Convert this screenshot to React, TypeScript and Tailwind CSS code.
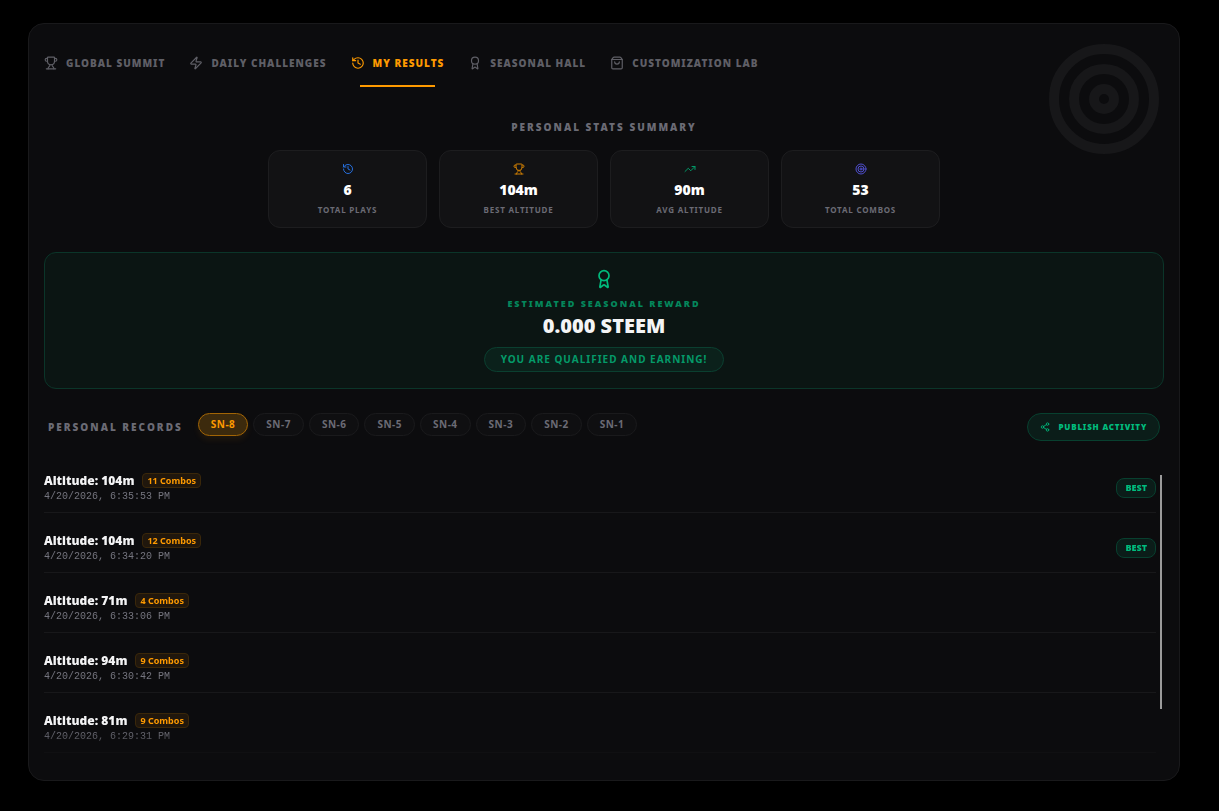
import { useState } from "react";
import {
  Award,
  History,
  Share2,
  ShoppingBag,
  Target,
  TrendingUp,
  Trophy,
  Zap,
} from "lucide-react";
import clsx from "clsx";

const tabs = [
  { id: "summit", label: "Global Summit", icon: Trophy },
  { id: "daily", label: "Daily Challenges", icon: Zap },
  { id: "results", label: "My Results", icon: History },
  { id: "hall", label: "Seasonal Hall", icon: Award },
  { id: "lab", label: "Customization Lab", icon: ShoppingBag },
];

const stats = [
  { label: "Total Plays", value: "6", icon: History, color: "text-[#2670e0]" },
  { label: "Best Altitude", value: "104m", icon: Trophy, color: "text-[#ce7e03]" },
  { label: "Avg Altitude", value: "90m", icon: TrendingUp, color: "text-[#029a68]" },
  { label: "Total Combos", value: "53", icon: Target, color: "text-[#504fd0]" },
];

const seasons = ["SN-8", "SN-7", "SN-6", "SN-5", "SN-4", "SN-3", "SN-2", "SN-1"];

const records = [
  { altitude: 104, combos: 11, date: "4/20/2026, 6:35:53 PM", best: true },
  { altitude: 104, combos: 12, date: "4/20/2026, 6:34:20 PM", best: true },
  { altitude: 71, combos: 4, date: "4/20/2026, 6:33:06 PM", best: false },
  { altitude: 94, combos: 9, date: "4/20/2026, 6:30:42 PM", best: false },
  { altitude: 81, combos: 9, date: "4/20/2026, 6:29:31 PM", best: false },
];

function TabBar() {
  const [active, setActive] = useState("results");

  return (
    <nav className="flex flex-wrap gap-6">
      {tabs.map(({ id, label, icon: Icon }) => (
        <button
          key={id}
          type="button"
          onClick={() => setActive(id)}
          className={clsx(
            "flex flex-col items-center text-[10px] leading-4 font-black tracking-widest uppercase",
            active === id ? "text-[#fe9a00]" : "text-[#5f5f66]"
          )}
        >
          <span className="flex items-center gap-2">
            <Icon size={14} />
            {label}
          </span>
          <span
            className={clsx(
              "mt-3.5 h-0.5 w-4/5",
              active === id ? "bg-[#fe9a00]" : "bg-transparent"
            )}
          />
        </button>
      ))}
    </nav>
  );
}

function StatsSummary() {
  return (
    <section className="mx-auto w-full max-w-2xl">
      <h2 className="text-center text-[10px] leading-4 font-black tracking-[2px] text-[#6b6b75] uppercase">
        Personal Stats Summary
      </h2>
      <div className="mt-[15px] grid grid-cols-4 gap-3">
        {stats.map(({ label, value, icon: Icon, color }) => (
          <div
            key={label}
            className="flex flex-col items-center gap-[5px] rounded-xl border border-[#1d1d1f] bg-[#121214] py-3"
          >
            <Icon size={12} className={color} />
            <span className="text-sm leading-5 font-black text-white">
              {value}
            </span>
            <span className="text-[8px] leading-[10px] font-bold tracking-widest text-[#6b6b75] uppercase">
              {label}
            </span>
          </div>
        ))}
      </div>
    </section>
  );
}

function RewardCard() {
  return (
    <section className="flex flex-col items-center rounded-xl border border-[#0b3529] bg-[#0b1513] p-4">
      <Award size={20} className="text-[#00bc7d]" />
      <h2 className="mt-[7px] text-[9px] leading-4 font-black tracking-[2px] text-[#04875c] uppercase">
        Estimated Seasonal Reward
      </h2>
      <p className="text-xl leading-7 font-black text-[#f4f4f5]">0.000 STEEM</p>
      <p className="mt-[7px] rounded-full border border-[#0b3f30] bg-[#0b211b] px-4 py-1 text-[10px] leading-[15px] font-bold tracking-widest text-[#049a69] uppercase">
        You are qualified and earning!
      </p>
    </section>
  );
}

function RecordsHeader() {
  const [season, setSeason] = useState("SN-8");

  return (
    <div className="flex items-start justify-between px-1">
      <div className="flex items-start gap-[15px]">
        <h2 className="pt-1.5 text-[10px] leading-4 font-black tracking-[2px] text-[#6b6b75] uppercase">
          Personal Records
        </h2>
        <div className="flex gap-[5px]">
          {seasons.map((name) => (
            <button
              key={name}
              type="button"
              onClick={() => setSeason(name)}
              className={clsx(
                "rounded-full border px-3 text-[10px] leading-[21px] font-bold tracking-wider",
                season === name
                  ? "border-[#a26505] bg-[#3c2a0d] text-[#fe9a00] shadow-[0_4px_6px_rgba(254,154,0,0.08)]"
                  : "border-[#1a1a1c] bg-[#0f0f11] text-[#6b6b75]"
              )}
            >
              {name}
            </button>
          ))}
        </div>
      </div>
      <button
        type="button"
        className="flex items-center gap-2 rounded-full border border-[#08402f] bg-[#0b1d19] px-3 py-1.5 text-[8px] leading-[14px] font-black tracking-widest text-[#00bc7d] uppercase"
      >
        <Share2 size={10} />
        Publish Activity
      </button>
    </div>
  );
}

function RecordList() {
  return (
    <div className="flex items-start gap-1 pr-0.5">
      <ul className="flex-1 mask-b-from-88% pb-3">
        {records.map((record) => (
          <li
            key={record.date}
            className="flex h-15 items-center justify-between border-b border-[#18181a] pt-2.5"
          >
            <div>
              <div className="flex items-center gap-2">
                <span className="text-xs leading-[18px] font-black text-[#f4f4f5]">
                  Altitude: {record.altitude}m
                </span>
                <span className="rounded-sm border border-[#3a270a] bg-[#20170d] px-1 text-[9px] leading-[13px] font-bold text-[#fe9a00]">
                  {record.combos} Combos
                </span>
              </div>
              <time className="block font-['Liberation_Mono',monospace] text-[10px] leading-[14px] text-[#75757f]">
                {record.date}
              </time>
            </div>
            {record.best && (
              <span className="rounded-lg border border-[#08402f] bg-[#0b1d19] px-2 text-[9px] leading-[18px] font-black text-[#00bc7d]">
                BEST
              </span>
            )}
          </li>
        ))}
      </ul>
      <div className="mt-[22px] h-[234px] w-0.5 bg-[#9b9b9b]" />
    </div>
  );
}

export default function App() {
  return (
    <main className="min-h-screen bg-black pt-[23px] pr-[39px] pb-[30px] pl-7 font-['Noto_Sans',sans-serif]">
      <div className="relative rounded-2xl border border-[#19191b] bg-[#0c0c0e] px-[15px] pt-[31px] pb-[15px]">
        <Target
          size={120}
          className="pointer-events-none absolute top-[15px] right-[15px] text-[#171719]"
        />
        <TabBar />
        <div className="mt-8 flex flex-col gap-6">
          <StatsSummary />
          <RewardCard />
          <div className="flex flex-col gap-3">
            <RecordsHeader />
            <RecordList />
          </div>
        </div>
      </div>
    </main>
  );
}
